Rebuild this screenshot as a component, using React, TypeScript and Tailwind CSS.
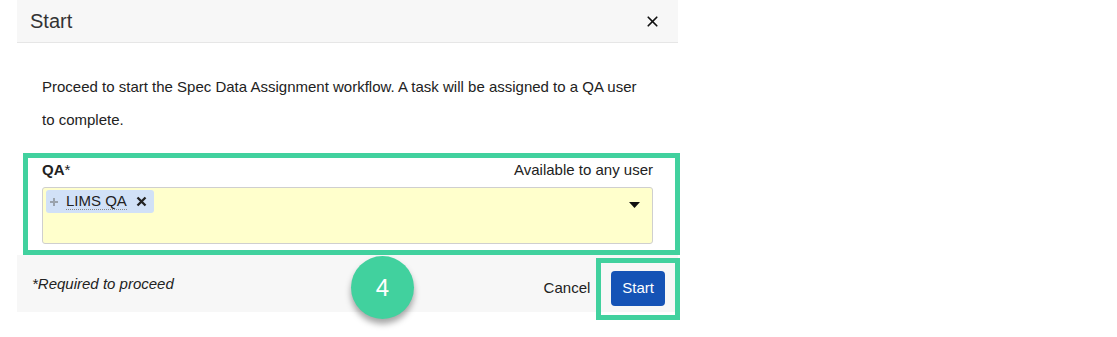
import { X } from "lucide-react";

/**
 * Start workflow dialog with tutorial annotations
 */
export default function App() {
  return (
    <div className="min-h-[337px] w-[1117px] bg-white pl-[17px] font-['Liberation_Sans',Arial,sans-serif] text-[#222]">
      <div className="relative w-[661px]">
        {/* Header */}
        <div className="flex h-[43px] items-center justify-between border-b border-[#e6e6e6] bg-[#f7f7f7] pl-[13px] pr-[17px]">
          <h2 className="pb-[1px] text-[20px] leading-none text-[#333]">Start</h2>
          <X className="h-[17px] w-[17px] text-[#111]" strokeWidth={2.4} />
        </div>

        {/* Body */}
        <div className="px-[25px] pt-[27px] pb-[11px]">
          <p className="text-[15px] leading-[33px]">
            Proceed to start the Spec Data Assignment workflow. A task will be assigned to a QA user to complete.
          </p>

          <div className="mt-[24px]">
            <div className="mb-[7px] flex h-[20px] items-center justify-between text-[15px]">
              <span className="font-bold">
                QA<span className="font-normal">*</span>
              </span>
              <span>Available to any user</span>
            </div>
            <div className="flex h-[57px] items-start justify-between rounded-[3px] border border-[#cfcfcf] bg-[#ffffcc] pl-[3px] pr-[12px] pt-[2px]">
              <span className="flex h-[23px] items-center gap-[8px] rounded-[3px] bg-[#d1e1f7] pl-[4px] pr-[7px]">
                <svg width="8" height="8" viewBox="0 0 8 8" className="text-[#9aa3ad]">
                  <path d="M3 0h2v3h3v2H5v3H3V5H0V3h3z" fill="currentColor" />
                </svg>
                <span className="border-b border-dotted border-[#888] text-[15px] leading-[16px]">LIMS QA</span>
                <svg width="11" height="11" viewBox="0 0 11 11" className="ml-[1px]">
                  <path d="M1.5 1.5l8 8M9.5 1.5l-8 8" stroke="#222" strokeWidth="2.3" />
                </svg>
              </span>
              <svg width="11" height="6" viewBox="0 0 11 6" className="mt-[12px]">
                <path d="M0 0h11L5.5 6z" fill="#111" />
              </svg>
            </div>
          </div>
        </div>

        {/* Footer */}
        <div className="flex h-[57px] items-center justify-between bg-[#f7f7f7] pl-[15px] pr-[13px]">
          <span className="mt-[2px] text-[15px] italic">*Required to proceed</span>
          <div className="flex items-center gap-[21px]">
            <span className="mt-[10px] text-[15px]">Cancel</span>
            <button className="mt-[10px] h-[35px] rounded-[4px] bg-[#1553b6] px-[11px] text-[15px] text-white">
              Start
            </button>
          </div>
        </div>

        {/* Annotation highlights */}
        <div className="pointer-events-none absolute left-[6px] top-[153px] h-[102px] w-[657px] border-[5px] border-[#41d19e]" />
        <div className="pointer-events-none absolute left-[579px] top-[258px] h-[62px] w-[84px] border-[5px] border-[#41d19e]" />
        <div className="absolute left-[334px] top-[256px] flex h-[63px] w-[63px] items-center justify-center rounded-full bg-[#41d19e] text-[24px] text-white shadow-[0_5px_6px_rgba(0,0,0,0.35)]">
          4
        </div>
      </div>
    </div>
  );
}
